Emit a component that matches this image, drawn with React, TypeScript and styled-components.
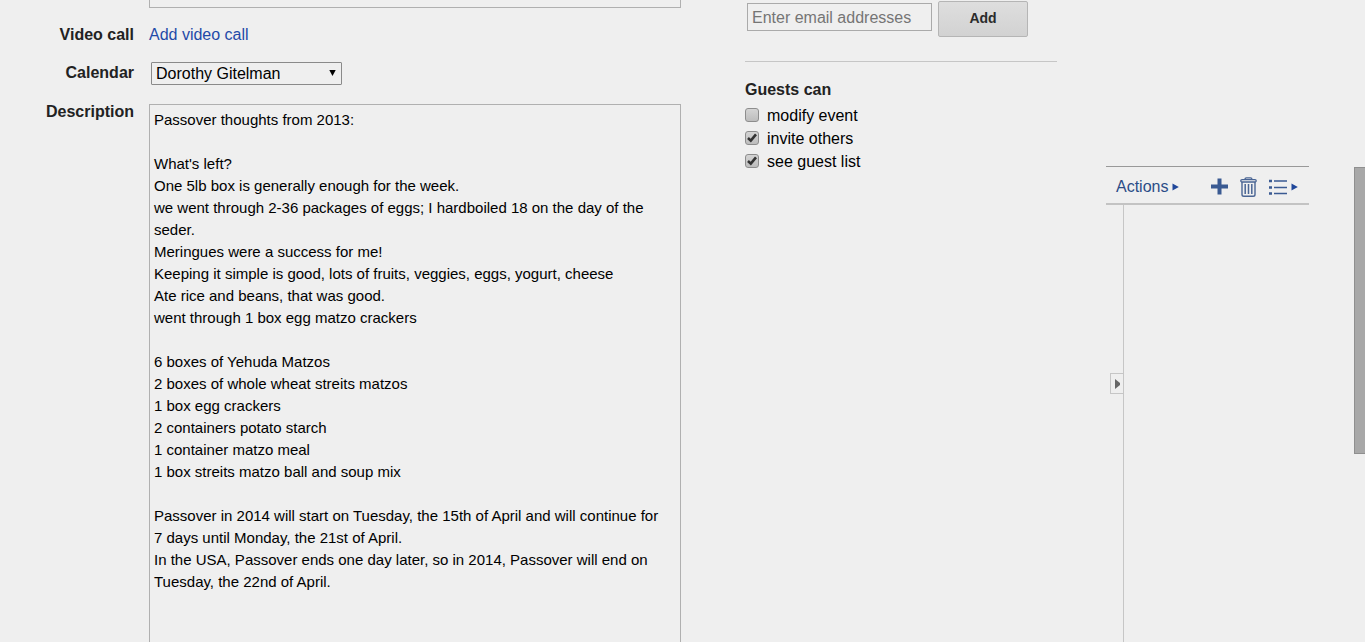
import React from 'react';
import styled, { createGlobalStyle } from 'styled-components';

const GlobalStyle = createGlobalStyle`
  * { box-sizing: border-box; }
  body {
    margin: 0;
    background: #efefef;
    color: #000;
    font-family: "Liberation Sans", Arial, sans-serif;
    font-size: 16px;
    line-height: 22px;
  }
  button, input, select, textarea { font: inherit; color: inherit; margin: 0; }
`;

const Page = styled.div`
  display: grid;
  grid-template-columns: minmax(0, 1fr) 361px 248px 11px;
  height: 100vh;
  overflow: hidden;
`;

const EventForm = styled.form`
  display: grid;
  grid-template-columns: 134px minmax(0, 1fr);
  column-gap: 15px;
  align-content: start;
  margin-right: 64px;
`;

const LocationInput = styled.input`
  grid-column: 2;
  height: 8px;
  padding: 0 4px;
  border: 1px solid #b0b0b0;
  border-top: 0;
  background: transparent;
`;

const FieldLabel = styled.label`
  padding-top: 16px;
  text-align: right;
  font-weight: bold;
  color: #222;
`;

const VideoLink = styled.a`
  margin-top: 16px;
  justify-self: start;
  color: #1f4aa8;
  text-decoration: none;
`;

const SelectWrap = styled.div`
  position: relative;
  width: 191px;
  height: 23px;
  margin: 16px 0 0 2px;
`;

const Select = styled.select`
  appearance: none;
  display: block;
  width: 100%;
  height: 100%;
  padding: 0 24px 0 4px;
  border: 1px solid #8a8a8a;
  border-radius: 1px;
  background: transparent;
`;

const SelectArrow = styled.svg`
  position: absolute;
  top: 8px;
  right: 6px;
  pointer-events: none;
`;

const Description = styled.textarea`
  display: block;
  width: 100%;
  margin-top: 19px;
  padding: 4px 14px 4px 4px;
  border: 1px solid #b0b0b0;
  background: transparent;
  font-size: 15px;
  resize: none;
  overflow: hidden;
`;

const Guests = styled.section`
  margin-right: 49px;
  padding-top: 1px;
`;

const InviteRow = styled.form`
  display: flex;
  align-items: flex-start;
  gap: 6px;
  padding: 0 0 24px 2px;
  border-bottom: 1px solid #c6c6c6;
`;

const EmailInput = styled.input`
  width: 185px;
  height: 28px;
  margin-top: 2px;
  padding: 2px 4px 0;
  border: 1px solid #aaa;
  background: transparent;
  &::placeholder { color: #757575; opacity: 1; }
`;

const AddButton = styled.button`
  width: 90px;
  height: 36px;
  padding: 0 0 2px;
  border: 1px solid #b5b5b5;
  border-radius: 2px;
  background: linear-gradient(#dedede, #d2d2d2);
  color: #2b2b2b;
  font-size: 14px;
  font-weight: bold;
`;

const Permissions = styled.fieldset`
  margin: 17px 0 0;
  padding: 0;
  border: 0;
`;

const PermissionsTitle = styled.legend`
  padding: 0;
  margin-bottom: 3px;
  font-weight: bold;
  color: #222;
`;

const Permission = styled.label`
  display: flex;
  align-items: center;
  gap: 8px;
  height: 23px;
`;

const CheckSlot = styled.span`
  display: grid;
  width: 14px;
  height: 14px;
  margin-bottom: 2px;
  & > * { grid-area: 1 / 1; }
`;

const Checkbox = styled.input`
  appearance: none;
  width: 14px;
  height: 14px;
  border: 1px solid #8d8d8d;
  border-radius: 3px;
  background: linear-gradient(#d4d4d4, #bdbdbd);
  & + svg { visibility: hidden; pointer-events: none; }
  &:checked + svg { visibility: visible; }
`;

const Tasks = styled.aside`
  display: flex;
  flex-direction: column;
  margin: 166px 45px 0 0;
`;

const Toolbar = styled.div`
  display: flex;
  align-items: center;
  flex: none;
  height: 39px;
  padding: 3px 11px 0 10px;
  border-top: 1px solid #999;
  border-bottom: 2px solid #c3c3c3;
`;

const ToolButton = styled.button`
  display: flex;
  align-items: center;
  gap: 4px;
  padding: 0;
  border: 0;
  background: none;
  color: #2b4c87;
  & + & { margin-left: 12px; }
  &:first-child { margin-right: auto; }
`;

const TaskBody = styled.div`
  display: flex;
  flex: 1;
  align-items: flex-start;
  padding-left: 4px;
`;

const Collapse = styled.button`
  display: flex;
  align-items: center;
  justify-content: flex-end;
  width: 13px;
  height: 21px;
  margin-top: 168px;
  padding: 0 3px 0 0;
  border: 1px solid #c6c6c6;
  border-right: 0;
  background: transparent;
`;

const TaskList = styled.div`
  flex: 1;
  align-self: stretch;
  border-left: 1px solid #c6c6c6;
`;

const ScrollThumb = styled.div`
  height: 287px;
  margin-top: 167px;
  border: 1px solid #8f8f8f;
  border-right: 0;
  background: #a8a8a8;
`;

const notes = `Passover thoughts from 2013:

What's left?
One 5lb box is generally enough for the week.
we went through 2-36 packages of eggs; I hardboiled 18 on the day of the seder.
Meringues were a success for me!
Keeping it simple is good, lots of fruits, veggies, eggs, yogurt, cheese
Ate rice and beans, that was good.
went through 1 box egg matzo crackers

6 boxes of Yehuda Matzos
2 boxes of whole wheat streits matzos
1 box egg crackers
2 containers potato starch
1 container matzo meal
1 box streits matzo ball and soup mix

Passover in 2014 will start on Tuesday, the 15th of April and will continue for 7 days until Monday, the 21st of April.
In the USA, Passover ends one day later, so in 2014, Passover will end on Tuesday, the 22nd of April.`;

const permissions = [
  { name: 'modify event', on: false },
  { name: 'invite others', on: true },
  { name: 'see guest list', on: true },
];

const MenuArrow = () => (
  <svg width="7" height="8" viewBox="0 0 7 8" aria-hidden="true">
    <path d="M0.5 0.5L6.8 4L0.5 7.5Z" fill="#1f479a" />
  </svg>
);

export default function App() {
  return (
    <>
      <GlobalStyle />
      <Page>
        <EventForm>
          <LocationInput aria-label="Where" />
          <FieldLabel as="span">Video call</FieldLabel>
          <VideoLink href="#video">Add video call</VideoLink>
          <FieldLabel htmlFor="calendar">Calendar</FieldLabel>
          <SelectWrap>
            <Select id="calendar">
              <option>Dorothy Gitelman</option>
            </Select>
            <SelectArrow width="7" height="6" viewBox="0 0 7 6" aria-hidden="true">
              <path d="M0.3 0H6.7L3.5 6Z" fill="#000" />
            </SelectArrow>
          </SelectWrap>
          <FieldLabel htmlFor="description">Description</FieldLabel>
          <Description id="description" rows={26} defaultValue={notes} spellCheck={false} />
        </EventForm>

        <Guests>
          <InviteRow>
            <EmailInput type="email" placeholder="Enter email addresses" aria-label="Guest email" />
            <AddButton type="button">Add</AddButton>
          </InviteRow>
          <Permissions>
            <PermissionsTitle>Guests can</PermissionsTitle>
            {permissions.map((p) => (
              <Permission key={p.name}>
                <CheckSlot>
                  <Checkbox type="checkbox" defaultChecked={p.on} />
                  <svg width="14" height="14" viewBox="0 0 14 14" aria-hidden="true">
                    <path d="M3 7L5.8 9.6L11 3.4" fill="none" stroke="#333" strokeWidth="2.6" />
                  </svg>
                </CheckSlot>
                {p.name}
              </Permission>
            ))}
          </Permissions>
        </Guests>

        <Tasks>
          <Toolbar>
            <ToolButton type="button">Actions<MenuArrow /></ToolButton>
            <ToolButton type="button" aria-label="Add task">
              <svg width="17" height="17" viewBox="0 0 17 17" aria-hidden="true">
                <path d="M8.5 0.5V16.5M0 8.5H17" stroke="#3a5a92" strokeWidth="4" />
              </svg>
            </ToolButton>
            <ToolButton type="button" aria-label="Delete task">
              <svg width="17" height="20" viewBox="0 0 17 20" fill="none" stroke="#4a6594" aria-hidden="true">
                <path d="M5 2.5Q5 0.8 6.5 0.8H10.5Q12 0.8 12 2.5" strokeWidth="1.3" />
                <rect x="0.8" y="2.6" width="15.4" height="2.4" rx="1.2" strokeWidth="1.3" />
                <path d="M2 5V17.5Q2 19.3 3.8 19.3H13.2Q15 19.3 15 17.5V5" strokeWidth="1.4" />
                <path d="M5.2 7V17M8.5 7V17M11.8 7V17" strokeWidth="1.5" />
              </svg>
            </ToolButton>
            <ToolButton type="button" aria-label="Task lists">
              <svg width="18" height="16" viewBox="0 0 18 16" aria-hidden="true">
                <path d="M0 2H3M0 8.5H3M0 14.5H3" stroke="#3a5a92" strokeWidth="2.4" />
                <path d="M5 2H18M5 8.5H18M5 14.5H18" stroke="#3a5a92" strokeWidth="1.6" />
              </svg>
              <MenuArrow />
            </ToolButton>
          </Toolbar>
          <TaskBody>
            <Collapse type="button" aria-label="Collapse tasks">
              <svg width="5" height="10" viewBox="0 0 5 10" aria-hidden="true">
                <path d="M0 0L5 4V6L0 10Z" fill="#666" />
              </svg>
            </Collapse>
            <TaskList />
          </TaskBody>
        </Tasks>

        <ScrollThumb aria-hidden="true" />
      </Page>
    </>
  );
}
